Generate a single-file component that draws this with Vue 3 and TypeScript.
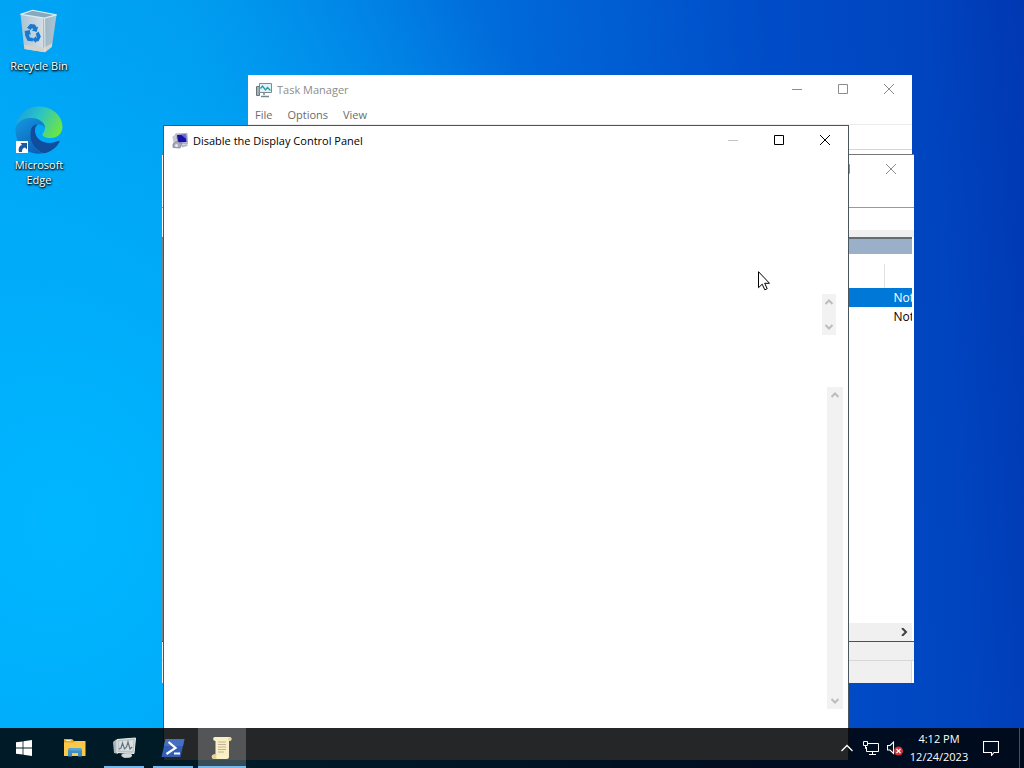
<script setup lang="ts">
interface TaskItem {
  id: string
  label: string
  state: 'idle' | 'running' | 'active'
}

interface PolicyRow {
  id: number
  state: string
  selected: boolean
}

const menus: string[] = ['File', 'Options', 'View']

const tasks: TaskItem[] = [
  { id: 'explorer', label: 'File Explorer', state: 'idle' },
  { id: 'taskmgr', label: 'Task Manager', state: 'running' },
  { id: 'powershell', label: 'Windows PowerShell', state: 'running' },
  { id: 'policy', label: 'Group Policy', state: 'active' },
]

const rows: PolicyRow[] = [
  { id: 1, state: 'Not', selected: true },
  { id: 2, state: 'Not', selected: false },
]
</script>

<template>
  <div class="screen">
    <main class="desktop">
      <button class="shortcut">
        <svg class="shortcut-icon" viewBox="-1 -2 52 52" aria-hidden="true">
          <defs>
            <linearGradient id="bin" x1="0" y1="0" x2="1" y2="0">
              <stop offset="0" stop-color="#a9c3d4" />
              <stop offset="0.62" stop-color="#d3dee5" />
              <stop offset="0.64" stop-color="#a2b6c3" />
              <stop offset="1" stop-color="#aac4d4" />
            </linearGradient>
          </defs>
          <path d="M5 6 18 1.500 44 6.500 39 41 31.500 47 9 43.500z" fill="url(#bin)" />
          <path d="M5 6 18 1.500 44 6.500 31 10z" fill="#86a9bc" />
          <path d="M5 6 18 1.500 44 6.500 31 10z" fill="none" stroke="#dcebf3" stroke-width="1.200" />
          <path d="M9 39 31 42 39 37V41L31.500 47 9.500 43.500z" fill="#d5d1cd" />
          <path d="M31 10 31.500 46" stroke="#e2eaee" stroke-width="1" />
          <g fill="#1979ce">
            <path d="M12 20.500 15.500 16.500 20.500 17 22.500 20 24 19 22.500 25 17 23.500 18.800 22.500 17.500 20.800 15.800 23z" />
            <path d="M9.500 24 15 23 16 28 14.200 27.500 15 31 18.500 31.500 18.300 35.500 12.500 34.500 10 29z" />
            <path d="M24.500 24.500 27 30 24.500 35 21.800 35.300 21.500 37 17.800 33.200 22 29.500 21.800 31.500 22.800 31 21.500 27z" />
          </g>
        </svg>
        <span>Recycle Bin</span>
      </button>

      <button class="shortcut">
        <svg class="shortcut-icon" viewBox="0 0 48 48" aria-hidden="true">
          <defs>
            <linearGradient id="edge-top" x1="0" y1="0.200" x2="1" y2="0.600">
              <stop offset="0" stop-color="#189ede" />
              <stop offset="0.450" stop-color="#2bc3c6" />
              <stop offset="1" stop-color="#6be545" />
            </linearGradient>
            <linearGradient id="edge-left" x1="0" y1="0" x2="0.600" y2="1">
              <stop offset="0" stop-color="#1598e0" />
              <stop offset="1" stop-color="#0d62b8" />
            </linearGradient>
          </defs>
          <path d="M1 20C3 8 12 .500 24 .500c14 0 23.500 10 23.500 20 0 7-5 11.500-12 11.500-5 0-8-1.500-8-3.500 0-1.500 2.500-3 2.500-7 0-5-6-9.500-13-9.500C9 12 3.500 15 1 20z" fill="url(#edge-top)" />
          <path d="M.500 23C2 16 8 12 15.500 12c8 0 14 4.500 14.500 10-1-2-3.500-3.500-6-3.500-5 0-8.500 4-8.500 11C15.500 38 21 45 29 47.300 13 50 0 39 .500 23z" fill="url(#edge-left)" />
          <path d="M16 24c-3 12 5 21 13 23.300C36 46 42 41 44.500 36c.500-1-.500-1.500-1.300-1C32 40 20 35 20 24c0-2 1-4 2.500-5.500C19.500 18.500 17 20 16 24z" fill="#104d9d" />
          <path d="M1 35h12v12H1z" fill="#fff" />
          <path d="M4 46c-1-4 .500-6.500 3-7L5.500 37H12v6.500L10 41.500C8 42 7 43 7 46z" fill="#215a9c" />
        </svg>
        <span>Microsoft Edge</span>
      </button>
    </main>

    <section class="window task-manager" aria-label="Task Manager">
      <header class="titlebar muted">
        <svg class="app-icon" viewBox="0 0 16 16" aria-hidden="true">
          <path d="M.500 4.500h3v9h-3z" fill="#a4b0b6" stroke="#69777c" />
          <path d="M3.500 1.500h12v9h-12z" fill="#dff4f8" stroke="#7e8c92" />
          <path d="M4.500 6.500 6.500 4l3 4 2-2.500 3 3" fill="none" stroke="#309aa2" stroke-width="1.300" />
          <path d="M8 11v2M5 14.500h8" stroke="#73898f" stroke-width="1.500" />
        </svg>
        <h2>Task Manager</h2>
        <div class="controls">
          <button aria-label="Minimize"><svg viewBox="0 0 10 10"><path d="M0 5.500h10" /></svg></button>
          <button aria-label="Maximize"><svg viewBox="0 0 10 10"><path d="M.500.500h9v9h-9z" /></svg></button>
          <button aria-label="Close"><svg viewBox="0 0 10 10"><path d="m0 0 10 10M10 0 0 10" /></svg></button>
        </div>
      </header>
      <nav class="menubar">
        <button v-for="menu in menus" :key="menu">{{ menu }}</button>
      </nav>
      <div class="tab-strip"></div>
    </section>

    <section class="window console" aria-label="Policy console">
      <header class="titlebar muted">
        <div class="controls">
          <button aria-label="Minimize"><svg viewBox="0 0 10 10"><path d="M0 5.500h10" /></svg></button>
          <button aria-label="Maximize"><svg viewBox="0 0 10 10"><path d="M.500.500h9v9h-9z" /></svg></button>
          <button aria-label="Close"><svg viewBox="0 0 10 10"><path d="m0 0 10 10M10 0 0 10" /></svg></button>
        </div>
      </header>
      <div class="console-menu"></div>
      <div class="console-tools"></div>
      <div class="console-gap"></div>
      <div class="console-body">
        <div class="caption"></div>
        <table>
          <thead>
            <tr><th></th><th class="state"></th></tr>
          </thead>
          <tbody>
            <tr v-for="row in rows" :key="row.id" :class="{ selected: row.selected }">
              <td></td>
              <td class="state">{{ row.state }}</td>
            </tr>
          </tbody>
        </table>
        <div class="h-scroll">
          <button aria-label="Scroll right"><svg viewBox="0 0 8 8"><path d="m2 0 4 4-4 4" /></svg></button>
        </div>
      </div>
      <div class="console-tabs"></div>
      <footer class="console-status"></footer>
    </section>

    <section class="window policy" aria-label="Disable the Display Control Panel">
      <header class="titlebar">
        <svg class="app-icon" viewBox="0 0 16 16" aria-hidden="true">
          <path d="M3.500 1 15 .500l.500 10L6 11z" fill="#c7c7d5" stroke="#9292a4" stroke-width=".700" />
          <path d="M5 2 14 1.500l.500 7.500L6 9.500z" fill="#1712a5" />
          <path d="m9 1.800 5-.300.300 4.500z" fill="#686ae2" />
          <path d="M.500 3.500 3.500 1.500l1 7.500-3 2z" fill="#c6c6ce" />
          <path d="m1 11 4-3 5 3-2 4-7-.500z" fill="#a6aab9" stroke="#777b90" stroke-width=".700" />
          <path d="m9 12 6.500-1v2l-5.500 1.500z" fill="#b8b8c1" />
          <circle cx="4.500" cy="12.500" r="1.500" fill="#e7e7ef" />
        </svg>
        <h1>Disable the Display Control Panel</h1>
        <div class="controls">
          <button aria-label="Minimize" disabled><svg viewBox="0 0 10 10"><path d="M0 5.500h10" /></svg></button>
          <button aria-label="Maximize"><svg viewBox="0 0 10 10"><path d="M.500.500h9v9h-9z" /></svg></button>
          <button aria-label="Close"><svg viewBox="0 0 10 10"><path d="m0 0 10 10M10 0 0 10" /></svg></button>
        </div>
      </header>
      <div class="policy-body">
        <div class="v-scroll short">
          <button aria-label="Scroll up" disabled><svg viewBox="0 0 8 8"><path d="m.500 6 3.500-3.500L7.500 6" /></svg></button>
          <button aria-label="Scroll down" disabled><svg viewBox="0 0 8 8"><path d="M.500 2 4 5.500 7.500 2" /></svg></button>
        </div>
        <div class="v-scroll tall">
          <button aria-label="Scroll up" disabled><svg viewBox="0 0 8 8"><path d="m.500 6 3.500-3.500L7.500 6" /></svg></button>
          <button aria-label="Scroll down" disabled><svg viewBox="0 0 8 8"><path d="M.500 2 4 5.500 7.500 2" /></svg></button>
        </div>
      </div>
    </section>

    <footer class="taskbar">
      <button class="start" aria-label="Start">
        <svg viewBox="0 0 16 16" width="16" height="16"><path d="M0 2.300 6.600 1.400v6.200H0zM7.400 1.300 16 0v7.600H7.400zM0 8.400h6.600v6.200L0 13.700zM7.400 8.400H16V16l-8.600-1.300z" fill="#fff" /></svg>
      </button>
      <button v-for="task in tasks" :key="task.id" class="task" :class="task.state" :aria-label="task.label">
        <svg v-if="task.id === 'explorer'" viewBox="0 0 24 24">
          <path d="M1 3h8l2 2h10.500v4H1z" fill="#e8a821" />
          <path d="M1 6.500h10L12.500 5H22.500V20H1z" fill="#fdc94a" />
          <path d="M3 4.500h5" stroke="#fff0b4" />
          <path d="M5 20.500v-7l1.500-1.500h11l1.500 1.500v7h-4V17H9v3.500z" fill="#3b8dc4" />
          <path d="M5 14.500h14v-1l-1.500-1.500h-11L5 13.500z" fill="#5aa5d2" />
        </svg>
        <svg v-else-if="task.id === 'taskmgr'" viewBox="0 0 24 24">
          <path d="m1 6 3-2.500 2 1V18l-4-1z" fill="#aab3b5" />
          <path d="M5 3.500 23.500 2 22 17.500l-17-1z" fill="#bac4c7" stroke="#e9efef" />
          <path d="M7 5.500 21.500 4l-1 11-13-.500z" fill="#d9e1e3" />
          <path d="m7 13 2-1 1.500-5 2 6 2-2 1.500-5 2 7 2-2" fill="none" stroke="#65777f" stroke-width="1.200" />
          <path d="M10 17.500h5l3 1v2l-5 1.500-4-2z" fill="#9aa6aa" />
          <ellipse cx="15" cy="19.500" rx="5" ry="2.300" fill="#d3dad9" />
        </svg>
        <svg v-else-if="task.id === 'powershell'" viewBox="0 0 24 24">
          <path d="M4.500 3H23.500L19.500 21H.500z" fill="#335eb4" />
          <path d="M4.500 3H23.500L22 10H3z" fill="#456fc0" />
          <path d="m7.500 6 7 6-9 6M13 17.500h6" fill="none" stroke="#fff" stroke-width="2.200" />
        </svg>
        <svg v-else viewBox="0 0 24 24">
          <path d="M5 1h14.500c3 0 2.500 4 0 4H19v16c0 1-1 2-2.500 2H4C1 23 1 18.500 4 18.500h1.500V5C3 5 2 1 5 1z" fill="#f9efc6" />
          <path d="M19.500 1c-2 1-1.500 4 0 4 2.500 0 2.500-4 0-4zM4 18.500h3c-2 2 0 4.500 0 4.500H4c-3 0-3-4.500 0-4.500z" fill="#e6d491" />
          <path d="M7 19.500h10.500v3H7z" fill="#fff3c8" />
          <path d="M8 6h8M8 8.500h8M8 11h8M8 13.500h8M8 16h6" stroke="#bdb491" />
        </svg>
      </button>

      <div class="tray">
        <button aria-label="Show hidden icons">
          <svg viewBox="0 0 16 16"><path d="m2.500 11 5.500-5.500 5.500 5.500" fill="none" stroke="#fff" stroke-width="1.300" /></svg>
        </button>
        <button aria-label="Network">
          <svg viewBox="0 0 16 16"><path d="M5 3.500h10.500v8H3.500V7M9.500 11.500v3M6 14.500h7M.500 1.500h4v4h-4zM2.500 5.500v3h1" fill="none" stroke="#fff" /></svg>
        </button>
        <button aria-label="Volume muted">
          <svg viewBox="0 0 16 16">
            <path d="M.500 5.500H3L6.500 2v11.500L3 10H.500z" fill="none" stroke="#fff" stroke-width="1.100" />
            <circle cx="11.500" cy="11" r="4.500" fill="#d13438" />
            <path d="m9.500 9 4 4m0-4-4 4" stroke="#fff" stroke-width="1.200" />
          </svg>
        </button>
        <button class="clock"><time>4:12 PM</time><time>12/24/2023</time></button>
        <button class="notifications" aria-label="Notifications">
          <svg viewBox="0 0 16 16"><path d="M.500 1.500h15v11H11l-2.500 3v-3h-8z" fill="none" stroke="#fff" stroke-width="1.100" /></svg>
        </button>
        <button class="show-desktop" aria-label="Show desktop"></button>
      </div>
    </footer>

    <svg class="pointer" viewBox="0 0 12 20" aria-hidden="true">
      <path d="M.500.700v16L4.200 13.200l2.600 5.600 2.400-1.100-2.500-5.400h4.800z" fill="#fff" stroke="#000" />
    </svg>
  </div>
</template>

<style>
body {
  margin: 0;
}
</style>

<style scoped>
.screen {
  position: relative;
  display: flex;
  flex-direction: column;
  height: 100vh;
  overflow: hidden;
  font-family: "Open Sans", "Noto Sans", sans-serif;
  font-size: 11px;
  line-height: 16px;
  color: #000;
  background:
    radial-gradient(ellipse 60% 90% at 6% 68%, #00b7ff 0%, rgba(0, 176, 252, 0.8) 35%, rgba(0, 160, 240, 0) 100%),
    linear-gradient(86deg, #00a2f4 0%, #0097ed 22%, #006cdb 50%, #004cc8 76%, #0045c0 90%, #0038b2 100%);
}

button {
  display: flex;
  align-items: center;
  justify-content: center;
  padding: 0;
  border: 0;
  background: none;
  font: inherit;
  color: inherit;
}

h1,
h2 {
  margin: 0;
  font-size: 11px;
  font-weight: 400;
  line-height: 16px;
}

.desktop {
  display: flex;
  flex: 1;
  flex-direction: column;
  align-items: flex-start;
  gap: 33px;
  padding-top: 7px;
}

.shortcut {
  flex-direction: column;
  gap: 3px;
  width: 78px;
  line-height: 15px;
  color: #fff;
  text-shadow: 1px 1px 2px #000, 0 1px 2px #000;
}

.shortcut span {
  width: 64px;
}

.shortcut-icon {
  width: 48px;
  height: 48px;
}

.window {
  position: absolute;
  display: flex;
  flex-direction: column;
  box-sizing: border-box;
  background: #fff;
}

.titlebar {
  display: flex;
  align-items: center;
  flex: none;
  height: 30px;
  padding-left: 8px;
}

.muted {
  color: #8c8c8c;
}

.app-icon {
  width: 16px;
  height: 16px;
  margin-right: 5px;
}

.controls {
  display: flex;
  align-self: stretch;
  margin-left: auto;
}

.controls button {
  width: 46px;
  padding-bottom: 2px;
}

.controls svg {
  width: 10px;
  height: 10px;
  fill: none;
  stroke: currentColor;
  overflow: visible;
}

.controls button:disabled {
  color: #c4c4c4;
}

.task-manager {
  top: 75px;
  right: 112px;
  bottom: 300px;
  left: 248px;
}

.menubar {
  display: flex;
  gap: 15px;
  height: 19px;
  padding-left: 7px;
  border-bottom: 1px solid #ececec;
  color: #6b6b6b;
}

.tab-strip {
  height: 24px;
  border-bottom: 1px solid #d4d4d4;
}

.console {
  top: 154px;
  right: 110px;
  bottom: 85px;
  left: 162px;
  border-top: 1px solid #777;
}

.console-menu {
  height: 22px;
  border-bottom: 1px solid #999;
}

.console-tools {
  height: 22px;
}

.console-gap {
  height: 7px;
  background: #f0f0f0;
}

.console-body {
  display: flex;
  flex: 1;
  flex-direction: column;
  margin-right: 2px;
  border-top: 2px solid #646c76;
  border-left: 1px solid #7d8288;
  overflow: hidden;
}

.caption {
  height: 15px;
  background: #9ab0c8;
}

table {
  width: 100%;
  margin-top: 10px;
  border-collapse: collapse;
  table-layout: fixed;
}

th,
td {
  height: 19px;
  padding: 0;
}

th {
  height: 24px;
}

.state {
  width: 18px;
  padding-left: 9px;
  font-size: 12px;
  text-align: left;
  white-space: nowrap;
  overflow: hidden;
}

th.state {
  border-left: 1px solid #e2e2e2;
}

.selected {
  color: #fff;
  background: #0078d7;
}

.h-scroll {
  display: flex;
  justify-content: flex-end;
  height: 18px;
  margin-top: auto;
  background: #f0f0f0;
}

.h-scroll button {
  width: 17px;
}

.h-scroll svg {
  width: 8px;
  height: 8px;
  fill: none;
  stroke: #404040;
  stroke-width: 2;
}

.console-tabs {
  height: 18px;
  border-top: 1px solid #505050;
  border-bottom: 1px solid #d7d7d7;
  background: #f0f0f0;
}

.console-status {
  height: 22px;
  margin-right: 2px;
  border-right: 1px solid #d7d7d7;
  background: #f0f0f0;
}

.policy {
  top: 125px;
  right: 175px;
  bottom: 8px;
  left: 163px;
  border: 1px solid #4a565e;
  border-bottom: 0;
}

.policy .titlebar {
  padding-left: 8px;
}

.policy-body {
  display: flex;
  flex: 1;
  flex-direction: column;
  align-items: flex-end;
  gap: 52px;
  padding: 138px 5px 51px 0;
}

.v-scroll {
  display: flex;
  flex-direction: column;
  justify-content: space-between;
  width: 16px;
  background: #f2f2f2;
}

.short {
  width: 14px;
  height: 41px;
  margin-right: 7px;
}

.tall {
  flex: 1;
}

.v-scroll button {
  height: 16px;
}

.v-scroll svg {
  width: 8px;
  height: 8px;
  fill: none;
  stroke: #bdbdbd;
  stroke-width: 2;
}

.taskbar {
  position: relative;
  display: flex;
  flex: none;
  gap: 1px;
  height: 40px;
  color: #fff;
  background: rgba(0, 2, 4, 0.86);
}

.start {
  width: 48px;
  margin-right: 2px;
}

.task {
  position: relative;
  width: 48px;
}

.task svg {
  width: 24px;
  height: 24px;
}

.task::after {
  position: absolute;
  right: 4px;
  bottom: 0;
  left: 4px;
  height: 2px;
  content: "";
}

.running::after,
.active::after {
  background: #76b9ed;
}

.active {
  background: rgba(255, 255, 255, 0.22);
}

.active::after {
  right: 0;
  left: 0;
}

.tray {
  display: flex;
  margin-left: auto;
}

.tray button {
  width: 24px;
}

.tray svg {
  width: 16px;
  height: 16px;
}

.tray .clock {
  flex-direction: column;
  width: 60px;
  margin-left: 2px;
  line-height: 18px;
}

.tray .notifications {
  width: 44px;
  margin-right: 6px;
}

.tray .show-desktop {
  width: 5px;
  border-left: 1px solid #465062;
}

.pointer {
  position: absolute;
  top: 271px;
  left: 758px;
  width: 12px;
  height: 20px;
}
</style>
